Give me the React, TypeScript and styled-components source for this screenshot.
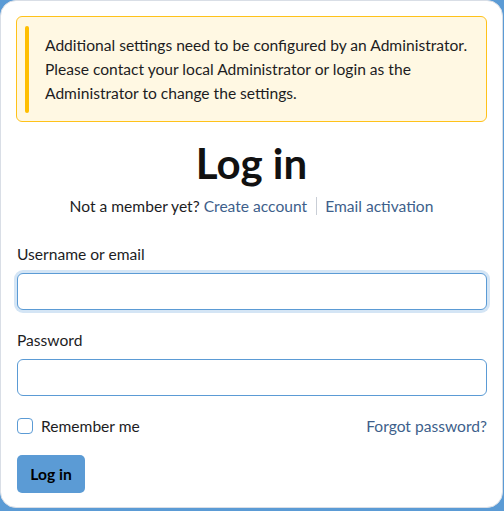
import React from "react";
import styled, { createGlobalStyle } from "styled-components";

const Global = createGlobalStyle`
  html, body { margin: 0; padding: 0; }
  body {
    background: #5b9bd5;
    font-family: Lato, "Noto Sans", sans-serif;
    color: #1d1d1f;
    width: 504px;
    height: 511px;
    overflow: hidden;
  }
  * { box-sizing: border-box; }
`;

const Card = styled.div`
  width: 503px;
  height: 508px;
  background: #fff;
  border: 1px solid #d9dee6;
  border-radius: 16px;
  padding: 15px 15px 0 15px;
  display: flex;
  flex-direction: column;
`;

const Warning = styled.div`
  position: relative;
  border: 1px solid #ffc21a;
  background: #fff8e3;
  border-radius: 6px;
  padding: 16px 12px 16px 28px;
  font-size: 15.6px;
  line-height: 24px;
  color: #1d1d1f;
  &::before {
    content: "";
    position: absolute;
    left: 8px;
    top: 9px;
    bottom: 8px;
    width: 4px;
    border-radius: 2px;
    background: #ffbf00;
  }
`;

const Title = styled.h1`
  margin: 16px 0 0;
  text-align: center;
  font-size: 42px;
  line-height: 50px;
  font-weight: 700;
  color: #111;
`;

const SubLine = styled.div`
  display: flex;
  justify-content: center;
  align-items: center;
  margin-top: 8px;
  font-size: 15.6px;
  line-height: 20px;
  color: #1d1d1f;
`;

const Link = styled.a<{ $first?: boolean }>`
  color: #3e5f8b;
  text-decoration: none;
  margin-left: ${(p) => (p.$first ? "4px" : "0")};
`;

const Sep = styled.span`
  display: inline-block;
  width: 1px;
  height: 18px;
  background: #c9ced6;
  margin: 0 8px 0 9px;
`;

const Form = styled.form`
  display: flex;
  flex-direction: column;
  margin-top: 28px;
  padding-left: 1px;
  font-size: 15.6px;
`;

const Label = styled.label`
  line-height: 20px;
  margin-bottom: 9px;
`;

const Input = styled.input<{ $focused?: boolean }>`
  width: 470px;
  height: 37px;
  border: 1px solid #5b9bd5;
  border-radius: 6px;
  background: #fff;
  outline: none;
  font: inherit;
  padding: 0 10px;
  margin-bottom: ${(p) => (p.$focused ? "20px" : "16px")};
  box-shadow: ${(p) => (p.$focused ? "0 0 0 3px #d4e5f5" : "none")};
`;

const OptionsRow = styled.div`
  display: flex;
  justify-content: space-between;
  align-items: center;
  width: 470px;
  margin-top: 4px;
  line-height: 20px;
`;

const CheckLabel = styled.label`
  display: flex;
  align-items: center;
  gap: 8px;
`;

const Box = styled.span`
  width: 16px;
  height: 16px;
  border: 1px solid #5b9bd5;
  border-radius: 4px;
  background: #fff;
`;

const Forgot = styled.a`
  color: #3e5f8b;
  text-decoration: none;
`;

const Button = styled.button`
  align-self: flex-start;
  margin-top: 19px;
  height: 38px;
  width: 68px;
  padding: 0;
  border: none;
  border-radius: 5px;
  background: #5b9bd5;
  color: #000;
  font-family: inherit;
  font-size: 15.6px;
  font-weight: 700;
`;

export default function App() {
  return (
    <>
      <Global />
      <Card>
        <Warning>
          Additional settings need to be configured by an Administrator.
          <br />
          Please contact your local Administrator or login as the
          <br />
          Administrator to change the settings.
        </Warning>
        <Title>Log in</Title>
        <SubLine>
          Not a member yet?<Link $first href="#">Create account</Link>
          <Sep />
          <Link href="#">Email activation</Link>
        </SubLine>
        <Form onSubmit={(e) => e.preventDefault()}>
          <Label>Username or email</Label>
          <Input $focused />
          <Label>Password</Label>
          <Input type="password" />
          <OptionsRow>
            <CheckLabel>
              <Box />
              Remember me
            </CheckLabel>
            <Forgot href="#">Forgot password?</Forgot>
          </OptionsRow>
          <Button type="submit">Log in</Button>
        </Form>
      </Card>
    </>
  );
}
